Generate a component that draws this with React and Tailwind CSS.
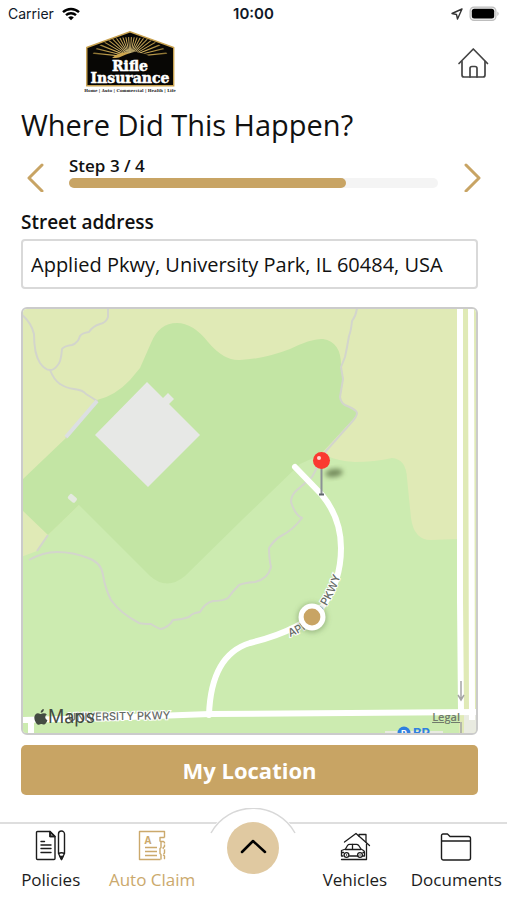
import React, { useState } from 'react'

const NAV_LEFT = [
  { id: 'policies', label: 'Policies', Icon: PoliciesIcon },
  { id: 'claim', label: 'Auto Claim', Icon: ClaimIcon },
]

const NAV_RIGHT = [
  { id: 'vehicles', label: 'Vehicles', Icon: VehiclesIcon },
  { id: 'documents', label: 'Documents', Icon: DocumentsIcon },
]

// angles of the sun rays in the logo, in degrees
const RAYS = [-84, -76, -68, -60, -52, -44, -36, -28, -20, -12, -4, 4, 12, 20, 28, 36, 44, 52, 60, 68, 76, 84]

function PoliciesIcon() {
  return (
    <svg width="32" height="32" viewBox="0 0 32 32" fill="none" stroke="currentColor" strokeWidth="1.4" strokeLinejoin="round" strokeLinecap="round">
      <path d="M15 1.5H2.5a1 1 0 0 0-1 1v26a1 1 0 0 0 1 1H19a1 1 0 0 0 1-1V6.5L15 1.5v5h5" />
      <path d="M15 1.5l5 5h-5z" fill="currentColor" fillOpacity="0.4" />
      <path d="M6 11.5h3.5M6 15h10M6 18.500h10M6 22.500h10" />
      <path d="M23.500 4a3 3 0 0 1 6 0v19.500l-3 6-3-6zM23.500 23.500q3-1.500 6 0" />
      <path d="M25 26.500h3l-1.500 3z" fill="currentColor" />
    </svg>
  )
}

function ClaimIcon() {
  return (
    <svg width="32" height="32" viewBox="0 0 32 32" fill="none" stroke="currentColor" strokeWidth="1.4" strokeLinejoin="round">
      <path d="M28.500 7.500V1.500H3.500v28h21" />
      <path d="M28.500 7.500h-4.500v3.500l1 1v5.500l-1 1v5l1 1v5" />
      <path d="M25 11.500h2.500l1 1v4l-1.500 1.500 1.500 1.500v3.500l-1.500 1.500 1.500 1.500v2.500l-1 1" strokeDasharray="5 1" />
      <path d="M9 17.500h12M9 21.500h12M9 25.500h12" />
      <text x="8.500" y="13.500" fontSize="10" fontWeight="700" fontFamily="Open Sans, sans-serif" fill="currentColor" stroke="none">A</text>
    </svg>
  )
}

function VehiclesIcon() {
  return (
    <svg width="32" height="32" viewBox="0 0 32 32" fill="none" stroke="currentColor" strokeWidth="1.3" strokeLinejoin="round" strokeLinecap="round">
      <path d="M5.500 12 17 3.500l13.500 12" />
      <path d="M20 6V4.500h7V12M27.500 14v15.500H2.500" />
      <path d="M4 26H2.500v-5.500l4-1.500 2-3.500q.8-1.200 2-1.200h7q1.200 0 2.200 1.200l2.300 3.500 2.500 1.500q1 .7 1 2V26h-2" />
      <path d="M6.500 19.500h15M13.500 14.500v5M10.500 26h8.500" />
      <circle cx="7.500" cy="25" r="2.400" />
      <circle cx="21" cy="25" r="2.400" />
      <path d="M7.500 25h.1M21 25h.1M3 22.500h1.500M24 22.500h1" />
    </svg>
  )
}

function DocumentsIcon() {
  return (
    <svg width="32" height="32" viewBox="0 0 32 32" fill="none" stroke="currentColor" strokeWidth="1.4" strokeLinejoin="round">
      <path d="M1.500 11V5.500a1.500 1.500 0 0 1 1.500-1.500h4.500L10 6.500h18.500a2 2 0 0 1 2 2V28a2 2 0 0 1-2 2h-25a2 2 0 0 1-2-2V11h29" />
    </svg>
  )
}

function Logo() {
  return (
    <svg width="92" height="66" viewBox="84 28 92 66" role="img" aria-label="Rifle Insurance">
      <defs>
        <radialGradient id="sun" gradientUnits="userSpaceOnUse" cx="130" cy="55" r="40">
          <stop offset="0" stopColor="#ffe9a0" />
          <stop offset="0.400" stopColor="#cfab55" />
          <stop offset="1" stopColor="#6f5a24" />
        </radialGradient>
        <clipPath id="roof">
          <ellipse cx="130" cy="58" rx="38" ry="21" />
        </clipPath>
      </defs>
      <path d="M86.800 47.500 130 31.800l43.700 15.700v38.300H86.800z" fill="#080705" stroke="#c9a24f" strokeWidth="1.400" />
      <g clipPath="url(#roof)">
        {RAYS.map(a => (
          <path key={a} d="M129.700 56 129.300 17h1.400l-.4 39z" fill="url(#sun)" transform={`rotate(${a} 130 57)`} />
        ))}
        <path d="M112 58q8-7 18-5l5 6z" fill="#cda64e" />
      </g>
      <path d="M88 60q20 0 31-2.500l7-3 6-2 4-1 3 1.500 5 .5 5 2.500 8 1 6 2h9.500v10H88z" fill="#080705" />
      <g fill="#fff" stroke="#fff" strokeWidth="0.500" fontFamily="DejaVu Serif, serif" fontWeight="700" textAnchor="middle">
        <text x="130" y="71" fontSize="14">Rifle</text>
        <text x="130" y="83" fontSize="14">Insurance</text>
      </g>
      <text x="130" y="92" fontSize="4" fontWeight="700" fontFamily="DejaVu Serif, serif" textAnchor="middle" fill="#222">
        Home | Auto | Commercial | Health | Life
      </text>
    </svg>
  )
}

function StatusBar() {
  return (
    <div className="grid grid-cols-3 items-center h-7 px-2 text-[15px] text-gray-900" style={{ fontFamily: 'Inter, sans-serif' }}>
      <div className="flex items-center gap-2 text-sm">
        <span>Carrier</span>
        <svg width="18" height="14" viewBox="0 0 18 14" fill="none" stroke="#000" strokeWidth="2.400">
          <path d="M1 5.200a11.500 11.500 0 0 1 16 0M4 8.200a7.300 7.300 0 0 1 10 0" />
          <path d="M9 13.300 6.200 10.500a4 4 0 0 1 5.600 0z" fill="#000" stroke="none" />
        </svg>
      </div>
      <div className="text-center font-semibold">10:00</div>
      <div className="flex items-center justify-end gap-1.5">
        <svg width="12" height="12" viewBox="0 0 12 12" fill="none" stroke="#333" strokeWidth="1.400" strokeLinejoin="round">
          <path d="M11 1 1 5.500l4.500 1L6.500 11z" />
        </svg>
        <svg width="30" height="16" viewBox="0 0 30 16">
          <rect x="0.500" y="0.500" width="27" height="14.500" rx="4.500" fill="#bdbdbd" />
          <rect x="1.700" y="1.700" width="24.600" height="12" rx="3.500" fill="#f1f1f1" />
          <rect x="2.800" y="2.800" width="22.400" height="9.800" rx="2.500" fill="#000" />
          <path d="M28.500 5.500q2 2.200 0 4.500z" fill="#aaa" />
        </svg>
      </div>
    </div>
  )
}

function MapDrawing() {
  return (
    <svg className="block w-full h-full" viewBox="23 309 453 424" preserveAspectRatio="xMidYMid slice" fill="none">
      <defs>
        <filter id="soft" x="-50%" y="-50%" width="200%" height="200%">
          <feGaussianBlur stdDeviation="2.500" />
        </filter>
        <path id="applied" d="M290 637 Q304 632 314 622 Q330 606 340 578 Q344 566 345 550" />
      </defs>

      {/* Land */}
      <rect x="0" y="280" width="520" height="480" fill="#e0eab6" />
      <path d="M0 565 37 551 48 535 79 505 300 455 325 455q12 6 30 7 20 0 37-4 14 1 15 20l4 40q3 22 20 22l28-1v230H0z" fill="#ccebb0" />
      <path d="M0 502 22 480 67 437 97 400q18-4 33-20l10-12 11-25q8-20 26-20 16 0 31 19 16 19 32 18 24-1 50-11 22-11 33-10 18 3 18 26l2 16-3 18 4 6q14 3 13 10l-37 40-20 9-57 55-58 57q-18 15-35 0l-71-71-31 30-48-46z" fill="#c3e5a4" />

      {/* Footpaths */}
      <g stroke="#d3d5cc" strokeWidth="2" strokeLinejoin="round">
        <path d="M21 314q10 8 13 20 0 20 6 29 5 7 10 7 4 10 10 14 6 4 14 5 9 1 12 5l8 5 3 2-31 37" />
        <path d="M108 308v9q-2 6-8 7-7 2-11 8-7 1-9 4-2 7-8 9-8 1-10 4-1 14-5 17-3 4-7 4" />
        <path d="M357 308q-1 8-5 13-1 10-3 15-2 12-4 21l-4 10 2 12-3 18q1 6 5 8 12 5 12 8 0 4-7 11l-24 27-14 26-15 13q-6 5-6 12 4 13 11 16-9 12-21 18-6 3-12 12 0 11 2 19-3 12-16 15-12 1-16 3-6 6-11 13-5 3-15 3-8 2-13 11-8 1-11 5-8 3-16 3-4 7-12 9-4-1-10-5-8 0-12-1-19-10-28-23-6-12-8-25-2-13-15-17-15-6-31-6-14 0-28 8" />
        <path d="M37 551l11-16" />
      </g>
      <path d="M97 401l-31 36" stroke="#dcdfe2" strokeWidth="4" />

      {/* Buildings */}
      <path d="M147 382l16 16 5-5 6 6-5 5 31 31-52 52-53-52z" fill="#e7e8e6" />
      <rect x="68" y="495" width="9" height="6" rx="2" fill="#e4e9df" transform="rotate(40 72 498)" />

      {/* Roads */}
      <path d="M464 712h13v22h-13z" fill="#e9ebe1" />
      <g stroke="#fff" strokeWidth="6">
        <path d="M295 467l27 28q19 23 19 53 0 34-19 59-20 23-72 36-39 12-41 72" strokeLinecap="round" />
        <path d="M20 720l80-2 110-4 268-2M31 718v20" />
        <path d="M460 300v300l1 112M471 300l1 420" />
      </g>
      <path d="M461 681v18m-3-4 3 5 3-5M461 722v14" stroke="#a5a5a5" strokeWidth="1.500" />

      {/* Road names */}
      <g fontFamily="Inter, sans-serif" fontSize="11" fontWeight="500" fill="#666b66" stroke="#fff" strokeWidth="2" paintOrder="stroke">
        <text x="68" y="721" transform="rotate(-1 68 721)">UNIVERSITY PKWY</text>
        <text>
          <textPath href="#applied">APPLIED PKWY</textPath>
        </text>
      </g>

      {/* Parking spot cut off by the bottom edge */}
      <rect x="385" y="731" width="58" height="8" fill="#e9ebe1" />
      <circle cx="404" cy="733" r="6.500" fill="#2f80e0" />
      <g fontFamily="Inter, sans-serif" fontWeight="700">
        <text x="401" y="737" fontSize="9" fill="#fff">P</text>
        <text x="413" y="738" fontSize="13" fill="#2f80e0">BP</text>
      </g>

      {/* Current location */}
      <circle cx="312" cy="618" r="15" fill="#5d7748" fillOpacity="0.400" filter="url(#soft)" />
      <circle cx="312" cy="617" r="13.500" fill="#fff" />
      <circle cx="312" cy="617" r="8.400" fill="#c8a464" />

      {/* Pin */}
      <ellipse cx="334" cy="473" rx="9" ry="4" fill="#4f6338" fillOpacity="0.700" filter="url(#soft)" transform="rotate(-8 334 473)" />
      <path d="M321.500 466v28" stroke="#8c9196" strokeWidth="2" />
      <path d="M319 494.500h5" stroke="#60666c" strokeWidth="2" />
      <circle cx="321.500" cy="460.500" r="8.500" fill="#fa3a31" />
      <circle cx="319" cy="458" r="2" fill="#ffd5d0" />
    </svg>
  )
}

function NavItem({ item, active, onSelect }) {
  const { id, label, Icon } = item
  return (
    <button
      type="button"
      onClick={() => onSelect(id)}
      className={`flex flex-col items-center gap-1.5 pt-1.5 text-[17px] leading-6 whitespace-nowrap ${
        active ? 'text-[#cba96c]' : 'text-[#1c1c1c]'
      }`}
    >
      <Icon />
      <span>{label}</span>
    </button>
  )
}

export default function App() {
  const [address, setAddress] = useState('Applied Pkwy, University Park, IL 60484, USA')
  const [tab, setTab] = useState('claim')
  const step = 3
  const total = 4

  return (
    <div className="flex flex-col min-h-screen bg-white text-[#111]" style={{ fontFamily: 'Open Sans, Noto Sans, sans-serif' }}>
      <StatusBar />

      <header className="flex items-center justify-between pl-21 pr-4">
        <Logo />
        <button type="button" aria-label="Home" className="pt-1 text-[#444]">
          <svg width="36" height="36" viewBox="0 0 36 36" fill="none" stroke="currentColor" strokeWidth="1.700" strokeLinejoin="round" strokeLinecap="round">
            <path d="M4 18.500 18.300 4l14.200 14.500" />
            <path d="M7 16.500V30q0 2 2 2h19q2 0 2-2V16.500" />
            <path d="M15 32v-8.500q0-2 2-2h3q2 0 2 2V32" />
          </svg>
        </button>
      </header>

      <main className="flex flex-col flex-1 pl-[21px] pr-[29px] pt-[11px]">
        <h1 className="text-[29px] leading-10">Where Did This Happen?</h1>

        {/* Step progress */}
        <div className="flex items-start mt-[11px] -mr-1">
          <button type="button" aria-label="Previous step" className="w-7 pt-1 flex justify-center">
            <svg width="20" height="32" viewBox="0 0 20 32" fill="none" stroke="#c8a464" strokeWidth="3" strokeLinecap="round" strokeLinejoin="round">
              <path d="M17 5 4 18 17 31" />
            </svg>
          </button>
          <div className="flex-1 ml-5 mr-4">
            <div className="text-[17px] leading-5 font-semibold">Step {step} / {total}</div>
            <div className="h-2.5 mt-0.5 rounded-full bg-[#f4f4f4]">
              <div className="h-2.5 rounded-full bg-[#c8a464]" style={{ width: `${(step / total) * 100}%` }} />
            </div>
          </div>
          <button type="button" aria-label="Next step" className="w-7 pt-1 flex justify-end">
            <svg width="20" height="32" viewBox="0 0 20 32" fill="none" stroke="#c8a464" strokeWidth="3" strokeLinecap="round" strokeLinejoin="round">
              <path d="M4 5l13 13L4 31" />
            </svg>
          </button>
        </div>

        <label htmlFor="street" className="mt-4 text-[19px] leading-7 font-semibold">Street address</label>
        <input
          id="street"
          value={address}
          onChange={e => setAddress(e.target.value)}
          className="mt-[3px] h-[50px] w-full rounded-sm border-2 border-[#d9d9d9] px-2 text-[20px]"
        />

        {/* Map */}
        <div className="relative flex-1 basis-[420px] mt-[18px] rounded-md border-2 border-[#cbcbcb] overflow-hidden">
          <div className="absolute inset-0">
            <MapDrawing />
          </div>
          <div className="absolute left-[11px] bottom-1 flex items-center text-[18px] leading-6 text-[#444c42]" style={{ fontFamily: 'Inter, sans-serif' }}>
            <svg width="14" height="16" viewBox="0 0 14 16" fill="currentColor">
              <path d="M9.800 0q.2 1.500-.8 2.700T6.700 3.800q-.2-1.500.8-2.600T9.800 0zM12.800 5.400q-1.700 1.100-1.600 2.900.1 2.200 2.200 3-.5 1.500-1.400 2.800Q11 15.600 10 15.600t-2-.5q-1-.3-2 .1-1 .5-1.700.5-1.200 0-2.400-2Q.3 11.300.3 8.800q0-2 1.100-3.300Q2.500 4.200 4 4.200q.8 0 1.700.5.800.3 1.200.3l1.300-.4q1-.4 1.800-.4 1.800.1 2.800 1.200z" />
            </svg>
            Maps
          </div>
          <a href="#legal" className="absolute right-4 bottom-2 text-[11px] leading-4 font-semibold text-[#707a6b] underline">Legal</a>
        </div>

        <button type="button" className="mt-2.5 h-[50px] w-full rounded-[5px] bg-[#c8a464] text-white text-[22px] font-bold">
          My Location
        </button>
      </main>

      <nav className="grid grid-cols-5 mt-[27px] h-[78px] border-t-2 border-[#dedede]">
        {NAV_LEFT.map(item => (
          <NavItem key={item.id} item={item} active={tab === item.id} onSelect={setTab} />
        ))}
        <div className="relative flex justify-center">
          {/* Bump rising above the bar's border */}
          <svg className="absolute -top-4 w-[96px] h-[50px]" viewBox="0 0 96 50" fill="none">
            <path d="M5 25a48 48 0 0 1 86 0z" fill="#fff" />
            <path d="M6 25a48 48 0 0 1 84 0" stroke="#d8d8d8" strokeWidth="1.500" />
          </svg>
          <button type="button" aria-label="Open menu" className="relative -mt-0.5 w-[52px] h-[52px] rounded-full bg-[#e0c9a1] flex items-center justify-center">
            <svg width="28" height="20" viewBox="0 0 28 20" fill="none" stroke="#000" strokeWidth="2.500" strokeLinecap="round" strokeLinejoin="round">
              <path d="M3 14 14 3l12 11" />
            </svg>
          </button>
        </div>
        {NAV_RIGHT.map(item => (
          <NavItem key={item.id} item={item} active={tab === item.id} onSelect={setTab} />
        ))}
      </nav>
    </div>
  )
}
